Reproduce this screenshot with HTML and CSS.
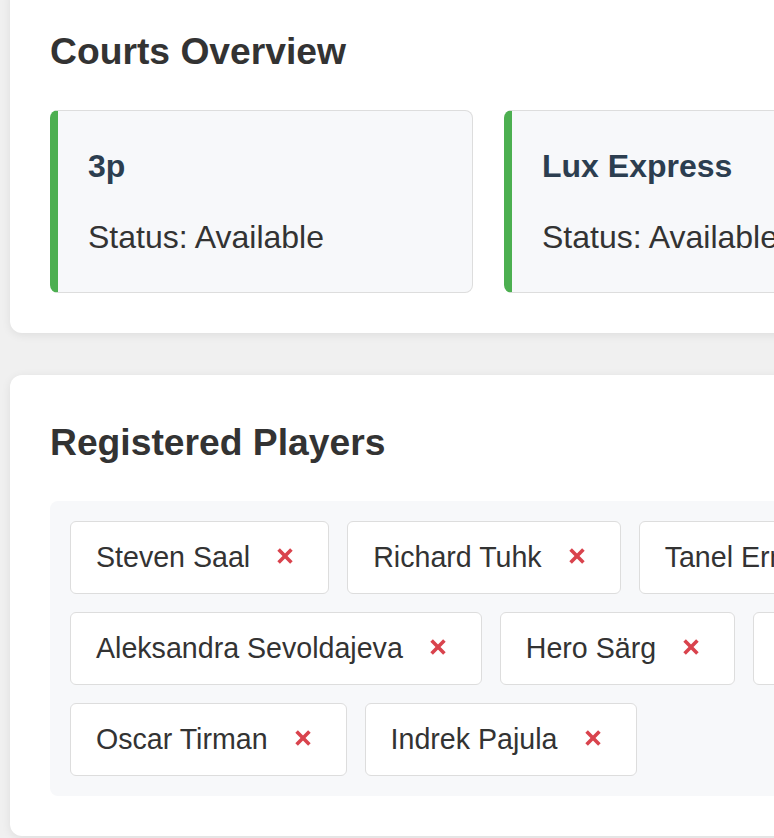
FILE: index.html
```html
<!DOCTYPE html>
<html lang="en">
<head>
<meta charset="utf-8">
<title>Tournament</title>
<link rel="stylesheet" href="styles.css">
</head>
<body>
<main class="page">
  <section class="card">
    <h2 class="card-title">Courts Overview</h2>
    <div class="courts">
      <div class="court court--available">
        <h3 class="court-name">3p</h3>
        <p class="court-status">Status: Available</p>
      </div>
      <div class="court court--available">
        <h3 class="court-name">Lux Express</h3>
        <p class="court-status">Status: Available</p>
      </div>
    </div>
  </section>

  <section class="card">
    <h2 class="card-title">Registered Players</h2>
    <ul class="players">
      <li class="player"><span class="player-name">Steven Saal</span><button class="remove" aria-label="Remove"><svg viewBox="0 0 16 16" width="16" height="16"><path d="M1.6 1.6 14.4 14.4M14.4 1.6 1.6 14.4"/></svg></button></li>
      <li class="player"><span class="player-name">Richard Tuhk</span><button class="remove" aria-label="Remove"><svg viewBox="0 0 16 16" width="16" height="16"><path d="M1.6 1.6 14.4 14.4M14.4 1.6 1.6 14.4"/></svg></button></li>
      <li class="player"><span class="player-name">Tanel Errit</span><button class="remove" aria-label="Remove"><svg viewBox="0 0 16 16" width="16" height="16"><path d="M1.6 1.6 14.4 14.4M14.4 1.6 1.6 14.4"/></svg></button></li>
      <li class="player"><span class="player-name">Aleksandra Sevoldajeva</span><button class="remove" aria-label="Remove"><svg viewBox="0 0 16 16" width="16" height="16"><path d="M1.6 1.6 14.4 14.4M14.4 1.6 1.6 14.4"/></svg></button></li>
      <li class="player"><span class="player-name">Hero Särg</span><button class="remove" aria-label="Remove"><svg viewBox="0 0 16 16" width="16" height="16"><path d="M1.6 1.6 14.4 14.4M14.4 1.6 1.6 14.4"/></svg></button></li>
      <li class="player"><span class="player-name">Mart Lepik</span><button class="remove" aria-label="Remove"><svg viewBox="0 0 16 16" width="16" height="16"><path d="M1.6 1.6 14.4 14.4M14.4 1.6 1.6 14.4"/></svg></button></li>
      <li class="player"><span class="player-name">Oscar Tirman</span><button class="remove" aria-label="Remove"><svg viewBox="0 0 16 16" width="16" height="16"><path d="M1.6 1.6 14.4 14.4M14.4 1.6 1.6 14.4"/></svg></button></li>
      <li class="player"><span class="player-name">Indrek Pajula</span><button class="remove" aria-label="Remove"><svg viewBox="0 0 16 16" width="16" height="16"><path d="M1.6 1.6 14.4 14.4M14.4 1.6 1.6 14.4"/></svg></button></li>
    </ul>
  </section>
</main>
</body>
</html>
```

FILE: styles.css
```css
html, body {
  margin: 0;
  padding: 0;
  overflow: hidden;
}

body {
  background: #f0f0f0;
  font-family: "Liberation Sans", Arial, Helvetica, sans-serif;
  color: #333;
}

.page {
  width: 1100px;
  margin-top: -16px;
  padding: 0 10px;
}

.card {
  background: #fff;
  border-radius: 12px;
  padding: 46px 40px 40px;
  margin-bottom: 42px;
  box-shadow: 0 2px 10px rgba(0, 0, 0, 0.08);
}

.card-title {
  margin: 0 0 38px;
  font-size: 37.25px;
  line-height: 42px;
  font-weight: 700;
  color: #333;
}

.courts {
  display: grid;
  grid-template-columns: repeat(auto-fill, 423px);
  gap: 31px;
}

.court {
  background: #f7f8fa;
  border: 1px solid #dddddd;
  border-left: 8px solid #4caf50;
  border-radius: 8px;
  padding: 37px 30px;
}

.court-name {
  margin: 0 0 35px;
  font-size: 32px;
  line-height: 36px;
  font-weight: 700;
  color: #2c3e50;
}

.court-status {
  margin: 0;
  font-size: 32px;
  line-height: 36px;
  color: #333;
}

.players {
  list-style: none;
  margin: 0;
  padding: 20px;
  display: flex;
  flex-wrap: wrap;
  gap: 18px;
  background: #f7f8fa;
  border-radius: 8px;
}

.player {
  display: flex;
  align-items: center;
  background: #fff;
  border: 1px solid #dddddd;
  border-radius: 6px;
  padding: 19px 35px 19px 25px;
  font-size: 28.6px;
  line-height: 33px;
  color: #333;
}

.remove {
  display: flex;
  margin: 0 0 3px 27px;
  padding: 0;
  border: 0;
  background: none;
  cursor: pointer;
}

.remove svg {
  display: block;
  stroke: #d9434d;
  stroke-width: 3.6;
  fill: none;
}
```
